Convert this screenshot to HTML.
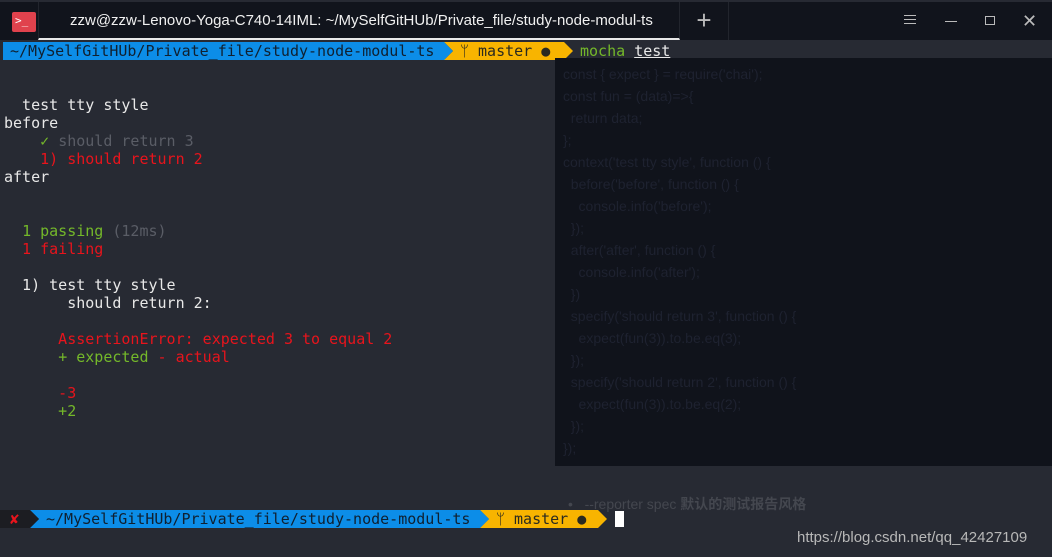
<!DOCTYPE html>
<html><head><meta charset="utf-8"><style>
*{margin:0;padding:0;box-sizing:border-box}
body{width:1052px;height:557px;background:#272a33;overflow:hidden;position:relative;font-family:"DejaVu Sans Mono","Liberation Mono",monospace;font-size:15px;color:#e8e8e8}
.tb{position:absolute;left:0;top:2px;width:1052px;height:38px;background:#11141c}
.tab{position:absolute;left:38px;top:0;width:642px;height:38px;border-left:1px solid #22252d;border-right:1px solid #22252d;border-bottom:2px solid #e8e8e8;color:#f0f0f0;font-family:"Liberation Sans",sans-serif;font-size:15px;line-height:38px;padding-left:31px}
.ico{position:absolute;left:12px;top:10px;width:24px;height:20px;background:#e0424d;border-radius:2px;color:#fff;font-size:11px;line-height:18px;padding-left:3px}
.row{position:absolute;left:4px;height:18px;line-height:18px;white-space:pre}
.seg{position:absolute;height:18px;line-height:18px;white-space:pre}
.code{position:absolute;left:555px;top:58px;width:497px;height:408px;background:#10131b;font-family:"Liberation Sans",sans-serif;font-size:14px;color:#1e2230;padding:5px 0 0 8px}
.code div{height:22px;line-height:22px;white-space:pre}
.g{color:#74b82a}.r{color:#e8141c}.d{color:#5a5d66}
</style></head><body>
<div class="tb">
<div class="ico">&gt;_</div>
<div class="tab">zzw@zzw-Lenovo-Yoga-C740-14IML: ~/MySelfGitHUb/Private_file/study-node-modul-ts</div>
<div style="position:absolute;left:680px;top:0;width:49px;height:38px;border-right:1px solid #22252d;color:#bbb;font:300 26px 'Liberation Sans';text-align:center;line-height:36px">+</div>
<div style="position:absolute;left:904px;top:13px;width:12px;height:1px;background:#bbb;box-shadow:0 4px #bbb,0 8px #bbb"></div>
<div style="position:absolute;left:945px;top:19px;width:12px;height:1px;background:#bbb"></div>
<div style="position:absolute;left:985px;top:14px;width:10px;height:9px;border:1px solid #bbb"></div>
<div style="position:absolute;left:1022px;top:9px;color:#bbb;font:18px 'DejaVu Sans'">✕</div>
</div>
<div class="seg" style="left:3px;top:42px;width:442px;background:#0c8de8;color:#102030;padding-left:7px">~/MySelfGitHUb/Private_file/study-node-modul-ts</div>
<svg style="position:absolute;left:444px;top:42px" width="130" height="18"><polygon points="0,0 9,9 0,18 120,18 129,9 120,0" fill="#f8b400"/><polygon points="0,0 9,9 0,18" fill="#0c8de8"/></svg>
<div class="seg" style="left:460px;top:42px;color:#2a2a20">ᛘ master ●</div>
<div class="seg" style="left:580px;top:42px"><span class="g">mocha</span> <span style="text-decoration:underline">test</span></div>
<div class="code">
<div>const { expect } = require('chai');</div><div>const fun = (data)=>{</div><div>  return data;</div><div>};</div><div>context('test tty style', function () {</div><div>  before('before', function () {</div><div>    console.info('before');</div><div>  });</div><div>  after('after', function () {</div><div>    console.info('after');</div><div>  })</div><div>  specify('should return 3', function () {</div><div>    expect(fun(3)).to.be.eq(3);</div><div>  });</div><div>  specify('should return 2', function () {</div><div>    expect(fun(3)).to.be.eq(2);</div><div>  });</div><div>});</div>
</div>
<div class="row" style="top:96px">  test tty style</div>
<div class="row" style="top:114px">before</div>
<div class="row" style="top:132px">    <span class="g">✓</span> <span class="d">should return 3</span></div>
<div class="row r" style="top:150px">    1) should return 2</div>
<div class="row" style="top:168px">after</div>
<div class="row" style="top:222px">  <span class="g">1 passing</span> <span class="d">(12ms)</span></div>
<div class="row r" style="top:240px">  1 failing</div>
<div class="row" style="top:276px">  1) test tty style</div>
<div class="row" style="top:294px">       should return 2:</div>
<div class="row r" style="top:330px">      AssertionError: expected 3 to equal 2</div>
<div class="row" style="top:348px">      <span class="g">+ expected</span> <span class="r">- actual</span></div>
<div class="row r" style="top:384px">      -3</div>
<div class="row g" style="top:402px">      +2</div>
<div style="position:absolute;left:568px;top:494px;font-family:'Liberation Sans','Noto Sans CJK SC',sans-serif;font-size:14px;color:#44474f">•&nbsp;&nbsp;&nbsp;--reporter spec <b>默认的测试报告风格</b></div>
<div class="seg" style="left:0;top:510px;width:30px;background:#1c1d22;color:#e8141c;padding-left:10px">✘</div>
<svg style="position:absolute;left:30px;top:510px" width="580" height="18"><polygon points="0,0 9,9 0,18 450,18 459,9 450,0" fill="#0c8de8"/><polygon points="0,0 9,9 0,18" fill="#1c1d22"/><polygon points="450,0 459,9 450,18 568,18 577,9 568,0" fill="#f8b400"/><polygon points="450,0 459,9 450,18" fill="#0c8de8"/></svg>
<div class="seg" style="left:46px;top:510px;color:#102030">~/MySelfGitHUb/Private_file/study-node-modul-ts</div>
<div class="seg" style="left:496px;top:510px;color:#2a2a20">ᛘ master ●</div>
<div style="position:absolute;left:615px;top:511px;width:9px;height:16px;background:#fff"></div>
<div style="position:absolute;left:797px;top:529px;font-family:'Liberation Sans',sans-serif;font-size:15px;color:#b8b8b8">https://blog.csdn.net/qq_42427109</div>
</body></html>
